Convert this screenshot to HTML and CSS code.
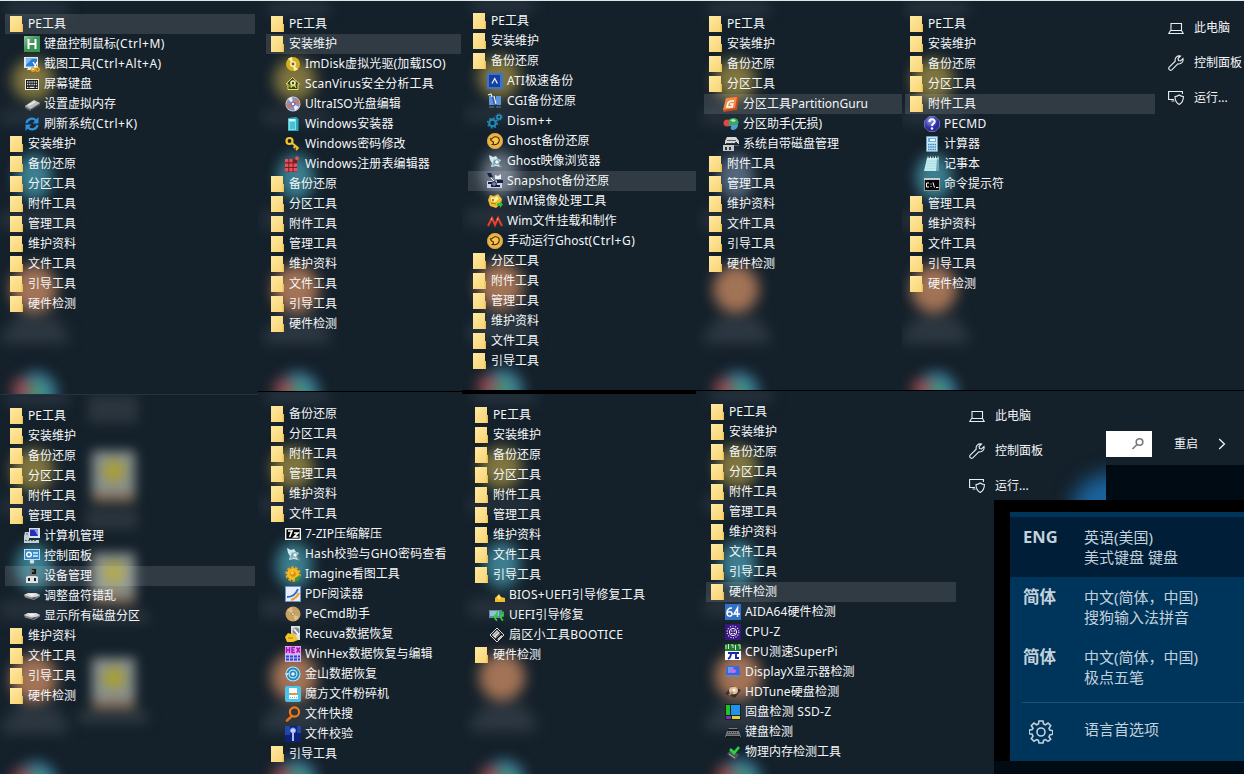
FILE: index.html
```html
<!DOCTYPE html>
<html lang="zh-CN">
<head>
<meta charset="utf-8">
<title>PE工具</title>
<link rel="stylesheet" href="styles.css">
</head>
<body>
<svg class="sprite" aria-hidden="true">
  <defs>
    <linearGradient id="gGreen" x1="0" y1="0" x2="1" y2="1"><stop offset="0" stop-color="#8fc79a"/><stop offset=".5" stop-color="#3d8f55"/><stop offset="1" stop-color="#2f9a4c"/></linearGradient>
    <radialGradient id="gPurple" cx=".4" cy=".3"><stop offset="0" stop-color="#8c93ee"/><stop offset="1" stop-color="#2c2a9c"/></radialGradient>
    <radialGradient id="gOrange"><stop offset="0" stop-color="#ffe27a"/><stop offset="1" stop-color="#eba52c"/></radialGradient>
  </defs>
  <symbol id="hkey" viewBox="0 0 16 16"><rect width="16" height="16" fill="url(#gGreen)"/><path d="M4.500 3v10M11.500 3v10M4.500 8h7" stroke="#fff" stroke-width="2" fill="none"/></symbol>
  <symbol id="shot" viewBox="0 0 16 16"><path fill="#dfe9f5" d="M0 1h14v11H0z"/><path fill="#2b7fd3" d="M2 2.500h11v8H2z"/><path fill="#7cc2f5" d="M2 3h6l-6 6z"/><path fill="#e8eef5" d="M4 12h6v2H3z"/><path d="M9 6l4 6M13 6l-3 6" stroke="#fff" stroke-width="1.300"/><circle cx="9" cy="13.500" r="1.700" fill="none" stroke="#f3a81c" stroke-width="1.500"/><circle cx="13.500" cy="13.500" r="1.700" fill="none" stroke="#f3a81c" stroke-width="1.500"/></symbol>
  <symbol id="osk" viewBox="0 0 16 16"><rect x="1.500" y="3.500" width="13" height="10" fill="#15191c" stroke="#e8e8de"/><path d="M3 6h10.500M3 8.500h10.500" stroke="#e8e8de" stroke-width="1.300" stroke-dasharray="1.300 .9"/><path d="M3 11.300h1.500M5.500 11.300h5M11.800 11.300h1.500" stroke="#e8e8de" stroke-width="1.300"/></symbol>
  <symbol id="ram" viewBox="0 0 16 16"><path fill="#66696b" d="M1 10l9-6 6 3v2L6 15 1 12z"/><path fill="#bfc2c3" d="M1 10l9-6 6 3-9.500 6z"/><path fill="#e7e7e4" d="M4 8.500l6-3.500 2 1-7 4z"/><path d="M7 14l9-5.500" stroke="#2b2d2e" stroke-dasharray="1 1"/></symbol>
  <symbol id="refresh" viewBox="0 0 16 16"><path d="M2.500 7A5.500 5.500 0 0 1 12 4.500M13.500 9A5.500 5.500 0 0 1 4 11.500" fill="none" stroke="#2b93de" stroke-width="2.400"/><path fill="#2b93de" d="M14.500 1v6.500H8.500zM1.500 15V8.500h6z"/></symbol>
  <symbol id="disc" viewBox="0 0 16 16"><circle cx="8" cy="8" r="7" fill="#d9b11c"/><path fill="#fff2a0" d="M8 8L3 2.500 7 1zM8 8l5 5.500-4 1.500z"/><circle cx="8" cy="8" r="3" fill="#f4f0d0"/><circle cx="8" cy="8" r="1.400" fill="#7a6412"/></symbol>
  <symbol id="house" viewBox="0 0 16 16"><path fill="#3b4415" stroke="#e3e36a" d="M1 8l6.500-6.500L14.500 8H13v5.500H3V8z"/><circle cx="8" cy="7" r="2.800" fill="#f5f2c8"/><path d="M6 12l2-5 3 5M4 10h7" stroke="#e8df62" fill="none"/><circle cx="8" cy="7" r="1.200" fill="#39400f"/></symbol>
  <symbol id="iso" viewBox="0 0 16 16"><circle cx="8" cy="8" r="7.500" fill="#d9d9e6"/><circle cx="8" cy="8" r="6.800" fill="#8f8fc0"/><path fill="#efeef9" d="M8 8L3 3l4-2zM8 8l6 3-4 4z"/><path fill="#c87d62" d="M8 8l5-5 2 5zM8 8l-5 5-2-5z"/><circle cx="8" cy="8" r="2" fill="#fff" stroke="#5d4c95"/></symbol>
  <symbol id="box" viewBox="0 0 16 16"><path fill="#27a7c2" d="M3 2l8-1 2.500 2v12H3z"/><path fill="#7fdce9" d="M3.500 3h7.500v11H3.500z"/><path fill="#49bfd1" d="M5 6h5v7H5z"/><path fill="#d7fafa" d="M4 3h6v2H4z"/></symbol>
  <symbol id="key" viewBox="0 0 16 16"><path d="M6.500 6.500l7 6M10.500 10l-1.800 2M12.800 12l-1.800 2" fill="none" stroke="#efc32a" stroke-width="2"/><circle cx="4.500" cy="5" r="3" fill="none" stroke="#f0c62e" stroke-width="2.200"/></symbol>
  <symbol id="reg" viewBox="0 0 16 16"><path fill="#7c1a22" d="M0 3h12v13H0z"/><path fill="#e4545c" d="M0 3h3.300v3.300H0zM4.300 3h3.300v3.300H4.300zM0 7.500h3.300v3.500H0zM4.300 7.500h3.300v3.500H4.300zM8.600 7.500H12v3.500H8.600zM0 12h3.300v3.500H0zM4.300 12h3.300v3.500H4.300zM8.600 12H12v3.500H8.600zM11 0l3 1.500-1 3-3-1z"/></symbol>
  <symbol id="ati" viewBox="0 0 16 16"><rect width="16" height="16" fill="#3a73d0"/><rect x="2" y="2" width="11" height="12" fill="#153f9f"/><path d="M5 10.500L7.700 5.500l2.700 5" fill="none" stroke="#e9f0fc" stroke-width="1.300"/></symbol>
  <symbol id="cgi" viewBox="0 0 16 16"><path fill="#5d94dd" d="M2 3h5v9H2zM9 3h5v9H9z"/><path fill="#2f62ad" d="M6 2l4 10H7L4 2z"/><path d="M1 2l3-1 1 3M7 3l2 8" fill="none" stroke="#eef4fb" stroke-width="1.200"/><path fill="#41556b" d="M2 13h5v2H2zM9 13h5v2H9z"/></symbol>
  <symbol id="gears" viewBox="0 0 16 16"><circle cx="5.500" cy="10" r="3.300" fill="none" stroke="#1f8bb9" stroke-width="2.200"/><circle cx="5.500" cy="10" r="4.900" fill="none" stroke="#1f8bb9" stroke-width="1.500" stroke-dasharray="1.800 2"/><circle cx="12" cy="4" r="2" fill="none" stroke="#2193bd" stroke-width="1.700"/><circle cx="12" cy="4" r="3.200" fill="none" stroke="#2193bd" stroke-dasharray="1.200 1.300"/></symbol>
  <symbol id="ghost" viewBox="0 0 16 16"><circle cx="8" cy="8" r="7.700" fill="url(#gOrange)" stroke="#f0c470" stroke-width=".6"/><path d="M3.500 6c2 .5 2-2 4.500-2.200C11.500 3.500 13 6 12 8.700c-1 3-4 3.300-6.500 2.800 1.500-.8 1-2 .5-3C5 8.500 3.800 7.500 3.500 6z" fill="#fbc64b" stroke="#352709" stroke-width="1.100"/></symbol>
  <symbol id="spirit" viewBox="0 0 16 16"><path fill="#cfe9ee" d="M2 2l4 2 3-1 2 3 3 1-2 3 1 4-4-1-5 1 1-4-2-3z"/><path fill="#85b3c1" d="M7 6l3 3-3 4-2-1z"/><circle cx="10" cy="9" r="2.300" fill="#eff9fa" stroke="#577c8a" stroke-width=".8"/><path d="M12 11l2.500 3.500" stroke="#819099" stroke-width="1.500"/></symbol>
  <symbol id="snap" viewBox="0 0 16 16"><path fill="#cbd3dd" d="M0 8h15v7H0z"/><path fill="#161d4d" d="M0 0h4l2 4H2zM10 7h6v3h-6zM1 9h4v2H1zM4 12h9v2H4z"/><path fill="#eef2f6" d="M8 2l3 1 3-2v5H8z"/><circle cx="7" cy="11" r="2.400" fill="#7884ba" stroke="#101637"/><path d="M4 5l3 3" stroke="#fff"/></symbol>
  <symbol id="wimp" viewBox="0 0 16 16"><path fill="#edbe35" d="M3 2l4 1 4-2 4 5-1 5-5 4-6-2-2-6z"/><path fill="#fff19c" d="M4 4l3 1 3-2 2 3-4 3-4-1z"/><circle cx="6" cy="7" r="1" fill="#9b521b"/><path d="M4 10l5 1" stroke="#bc6b18"/><path fill="#34bb35" d="M10 10h3V8l3 3.500-3 3.500v-2h-3z"/></symbol>
  <symbol id="wimm" viewBox="0 0 16 16"><path d="M1 13l4-8 3 7 3-7 4 8" fill="none" stroke="#e4402b" stroke-width="2"/><path d="M4 7l1-2M10 7l1-2" stroke="#ffab8e"/></symbol>
  <symbol id="guru" viewBox="0 0 16 16"><path fill="#c24d1d" d="M3 2l13-2-2 14-14 2z"/><path fill="#f28a49" d="M3 2l11-1-2 11-12 2z"/><path d="M11 5H7.500L5 7l-1 4h5l.7-3H7" fill="none" stroke="#fff" stroke-width="1.600"/></symbol>
  <symbol id="parta" viewBox="0 0 16 16"><ellipse cx="4.500" cy="7" rx="4" ry="3.500" fill="#dc4a42"/><ellipse cx="10.500" cy="6.500" rx="5" ry="4.500" fill="#36a768"/><path fill="#4d9bda" d="M9 9h6c0 3-3 5-5 5-2 0-3-2-2-3z"/><path fill="#b7edb0" d="M7 4l4-1 2 2-3 1z"/></symbol>
  <symbol id="dmgmt" viewBox="0 0 16 16"><path fill="#d4d8da" d="M4 1h9l3 4v3H2V5z"/><path fill="#5a6266" d="M4 4h9v1H4zM8 9h8v1h-5v5H8z"/><path fill="#c6cacb" d="M0 9h11v6H0z"/><path fill="#2f3538" d="M2 11h2v3H2zM6 11h2v3H6zM12 6h2v1h-2zM3 7h12v1H3z"/></symbol>
  <symbol id="help" viewBox="0 0 16 16"><path fill="url(#gPurple)" stroke="#8389ce" stroke-width=".7" d="M5 .5h6L15.500 5v6L11 15.500H5L.5 11V5z"/><path d="M5.300 6c0-3.500 5.700-3.500 5.400-.3C10.600 7.500 8 7.600 8 10" fill="none" stroke="#fff" stroke-width="2"/><circle cx="8" cy="12.500" r="1.200" fill="#fff"/></symbol>
  <symbol id="calc" viewBox="0 0 16 16"><path fill="#d0e8f6" stroke="#709fc2" stroke-width=".8" d="M2.500.500h11v15h-11z"/><path fill="#62b1de" d="M4 2h8v4H4z"/><path fill="#fff" d="M6 3h5v2H6z"/><path d="M4 8.500h8M4 11h8M4 13.500h8" stroke="#3585c2" stroke-width="1.500" stroke-dasharray="1.500 .7"/></symbol>
  <symbol id="note" viewBox="0 0 16 16"><path fill="#6aa7b0" d="M3 2h12v13H1z"/><path fill="#bfebee" d="M3 2h10l-1 13H0z"/><path d="M3 5h9M2.500 7.500H12M2 10h9M2 12.500h9" stroke="#9fd2d9" stroke-width=".5"/><path d="M4 .5v3M6.500.5v3M9 .5v3M11.500.5v3M14 .5v3" stroke="#e9f6f6"/></symbol>
  <symbol id="cmd" viewBox="0 0 16 16"><rect x=".5" y="2.500" width="15" height="12" fill="#050505" stroke="#8f9496"/><path fill="#c7ccce" d="M0 2h16v2H0z"/><path d="M5 7H2.500v4H5M7 7.500v1M7 10v1M9 6.500l1.500 5M12 11.500h2.500" fill="none" stroke="#fff"/></symbol>
  <symbol id="cman" viewBox="0 0 16 16"><path fill="#c3cdd5" d="M1 4h4v8h10v3H0V8z"/><path fill="#dce1e8" d="M5 0h11v10H5z"/><path fill="#2230bb" d="M6 1.500h8v6.500H6z"/><path fill="#849be9" d="M10 1.500h4V8z"/><path d="M1 12.500h12M2 6h2" stroke="#52626d" stroke-dasharray="2 1"/></symbol>
  <symbol id="cpl" viewBox="0 0 16 16"><rect x=".5" y="1.500" width="15" height="10" fill="#3589c7" stroke="#b7def4"/><circle cx="5" cy="6.500" r="2.300" fill="none" stroke="#fff" stroke-width="1.400"/><path d="M9 5h5M9 8h5" stroke="#dff3ff" stroke-width="1.300"/><circle cx="8" cy="13.500" r="2.300" fill="#d0dce2"/></symbol>
  <symbol id="dev" viewBox="0 0 16 16"><path fill="#6c7576" d="M6 0h7v8H6z"/><path fill="#141a1c" d="M8 1h4v5H8z"/><path fill="#dfe2e3" d="M2 9l2-1h8l2 1v6H2z"/><path fill="#222" d="M4 10h2v3H4zM10 10h2v3h-2z"/><path stroke="#a2c979" d="M8 3h2"/></symbol>
  <symbol id="drive" viewBox="0 0 16 16"><path fill="#85888a" d="M0 7l4-2h8l4 2v1.500l-6 3.500-9-2.500z"/><path fill="#d7d8d8" d="M0 7l4-2h8l4 2-7 3z"/><path fill="#f7f7f6" d="M4 6h7l-3 2z"/><path fill="#393d3f" d="M7 10l5-1-2 2z"/></symbol>
  <symbol id="zip" viewBox="0 0 16 16"><rect x=".7" y="2.700" width="14.600" height="10.600" fill="#080808" stroke="#fff" stroke-width="1.300"/><path d="M3 5h4L4.500 11M9 7h4l-4 4h4.500" fill="none" stroke="#fff" stroke-width="1.600"/></symbol>
  <symbol id="sunny" viewBox="0 0 16 16"><circle cx="8" cy="8" r="6.500" fill="none" stroke="#e9a51a" stroke-width="2.500" stroke-dasharray="2.500 1.500"/><circle cx="8" cy="8" r="6" fill="#f4bb20"/><path fill="#379a35" d="M10 12l5-3-1 5-4 1z"/><circle cx="8" cy="8" r="2.800" fill="#dc891a"/><circle cx="7.300" cy="7" r="1.400" fill="#ffda4b"/></symbol>
  <symbol id="pdf" viewBox="0 0 16 16"><rect x=".5" y=".5" width="15" height="15" fill="#e7eef7" stroke="#6593cf"/><path d="M2 11c5 0 9-3 11-8" fill="none" stroke="#326cc3" stroke-width="2"/><path d="M6 14c4-1 6-3 8-7" fill="none" stroke="#f19d31" stroke-width="2.300"/></symbol>
  <symbol id="pecmd" viewBox="0 0 16 16"><circle cx="8" cy="8" r="7.500" fill="#c8a163"/><path fill="#e0c18c" d="M8 8L2 4l5-3zM8 8l6 3-4 4z"/><circle cx="8" cy="8" r="1.500" fill="#f3e5c7" stroke="#b08c55"/></symbol>
  <symbol id="recuva" viewBox="0 0 16 16"><path fill="#dce0e4" d="M6 0h9v14H6z"/><circle cx="11" cy="5" r="3.500" fill="#818fa0"/><path d="M9 3l5 6" stroke="#fff" stroke-width="1.500"/><path fill="#f2c72b" d="M0 11l3-4 3 1 1-2 4 4 2 4-5 2H2z"/><path d="M3 12h5" stroke="#af8011"/></symbol>
  <symbol id="hex" viewBox="0 0 16 16"><rect width="16" height="16" fill="#efa2f3"/><path d="M1.500 1v6M4.500 1v6M1.500 4h3M10 1.500H7v5h3M7 4h2.500M11.500 1.500l3.500 5M15 1.500l-3.500 5" fill="none" stroke="#a018b8" stroke-width="1.500"/><path fill="#c4bdf6" d="M0 8h16v8H0z"/><path d="M1 10.500h14M1 13.500h14" stroke="#3440c6" stroke-width="2" stroke-dasharray="3 1"/></symbol>
  <symbol id="kspin" viewBox="0 0 16 16"><circle cx="8" cy="8" r="7.500" fill="#b9e5f5"/><circle cx="8" cy="8" r="5.500" fill="none" stroke="#2587bf" stroke-width="2"/><circle cx="8" cy="8" r="2.500" fill="#e9f9ff" stroke="#2587bf" stroke-width="1.500"/><path fill="#b9e5f5" d="M0 7h4l-2 3z"/></symbol>
  <symbol id="shred" viewBox="0 0 16 16"><rect width="16" height="16" rx="2" fill="#4cc3ea"/><path fill="#f5fbff" d="M4 2h8v5H4zM4 9h9v4H4z"/><path fill="#ed9139" d="M5 7h7v2H5z"/><path d="M5 11.500h7" stroke="#5bb8dd" stroke-dasharray="1 1"/></symbol>
  <symbol id="find" viewBox="0 0 16 16"><path d="M7 10l-5 4.500" stroke="#ee6b13" stroke-width="2.600" stroke-linecap="round"/><circle cx="9.500" cy="6" r="4.600" fill="none" stroke="#f27716" stroke-width="2.200"/></symbol>
  <symbol id="verify" viewBox="0 0 16 16"><rect width="16" height="16" fill="#0c237c"/><path fill="#2347a8" d="M0 0h5v9H0zM12 0h4v7h-4z"/><circle cx="8" cy="4.500" r="2.600" fill="#c6d4fc" stroke="#8194eb"/><path d="M8 7v8" stroke="#c2ccfa" stroke-width="1.800"/></symbol>
  <symbol id="bios" viewBox="0 0 16 16"><path fill="#f2bd27" d="M6 11l4-4 2 3 4 1v4H6z"/><path fill="#ffe57d" d="M8 10l2-2 2 3-2 2z"/><path stroke="#2b3843" d="M4 1v6"/></symbol>
  <symbol id="uefi" viewBox="0 0 16 16"><path fill="#65889a" d="M0 3h13v8H0z"/><path fill="#8cc3d5" d="M1 4h9v5H1z"/><path d="M8 13.500c-3.500-3-2.500-6 0-6.500M8 4.500V9H5M14 13.500c-3.500-3-2.500-6 0-6.500M14 4.500V9h-3" fill="none" stroke="#2fd043" stroke-width="1.700"/></symbol>
  <symbol id="boot" viewBox="0 0 16 16"><path fill="#15181a" stroke="#dedede" d="M1 8l7-7 7 7-7 7z"/><path fill="#d9d9d9" d="M3 8l5-5 3.500 3.500-5 5zM8 12.500l4.500-4.500 1 1-4 4z"/><path d="M5 8.500l4-4M7 10l4-4" stroke="#555" stroke-width=".8"/></symbol>
  <symbol id="aida" viewBox="0 0 16 16"><rect width="16" height="16" fill="#3172c6"/><path d="M7 4C4 4 2 6 2 9c0 4 5 4 5 1 0-3-4-3-5-.5M12.500 13V4L9 10h6" fill="none" stroke="#fff" stroke-width="1.500"/></symbol>
  <symbol id="cpuz" viewBox="0 0 16 16"><rect width="16" height="16" fill="#38157f"/><circle cx="8" cy="8" r="3.600" fill="none" stroke="#fff"/><circle cx="8" cy="8" r="5.800" fill="none" stroke="#ded2fc" stroke-width="1.200" stroke-dasharray="1.200 1.400"/><path d="M6 7h4M6 9.500h4" stroke="#fff" stroke-dasharray="1.500 1"/></symbol>
  <symbol id="pi" viewBox="0 0 16 16"><rect width="16" height="16" fill="#fff"/><path fill="#207a32" d="M0 0h16v7H0z"/><path d="M1 1v4M3.500 0v5M6 1h2v3M10.500 1v5M13 1h2v4" fill="none" stroke="#cdf5bd"/><path d="M3 9h11M6 9c0 3-1 5-3 6M11 9v5h3" fill="none" stroke="#1b28aa" stroke-width="1.900"/></symbol>
  <symbol id="dispx" viewBox="0 0 16 16"><path fill="#3965e2" d="M2 2h12l1 9H1z"/><path fill="#6a9cf0" d="M3 3h6l-4 6H3z"/><ellipse cx="8" cy="7" rx="3" ry="2" fill="#c66ed9"/><path fill="#6b85bd" d="M2 11h12l1 1.500H1z"/></symbol>
  <symbol id="hdt" viewBox="0 0 16 16"><path fill="#3e3129" d="M0 10l7-8 9 4-6 8z"/><ellipse cx="8.500" cy="6.500" rx="4.500" ry="3.700" fill="#dfc09b"/><circle cx="9" cy="6" r="1.500" fill="#fff7e8"/><path stroke="#a38a72" stroke-width="2" d="M4 11l4-3"/></symbol>
  <symbol id="ssdz" viewBox="0 0 16 16"><rect width="16" height="16" fill="#18231b"/><path fill="#1dc427" d="M1 1h4v10H1z"/><path fill="#1f93ec" d="M6 1h9v10H6z"/><path fill="#7f2cc0" d="M1 12h5v3H1z"/><path fill="#e4cf36" d="M7 12h8v3H7z"/></symbol>
  <symbol id="kbd" viewBox="0 0 16 16"><path fill="#777b7d" d="M2 7l2-3h8l2 3 2 6H0z"/><path fill="#15191c" d="M3 5h10l1 2H2zM1 12h14v2H1z"/><path d="M3 8.500h10M2.500 10.500h11" stroke="#24292b" stroke-dasharray="1 1"/></symbol>
  <symbol id="mem" viewBox="0 0 16 16"><path fill="#4e5459" d="M2 10l5-5 7 6-4 5z"/><path stroke="#a6b0b3" d="M4 10l6 4"/><path d="M5 5l4 4 5-6" fill="none" stroke="#26d63b" stroke-width="2.600"/></symbol>
  <symbol id="pc" viewBox="0 0 16 16"><path d="M3 3.500h10.500v7H3zM2.500 10.500L.8 13.500h14.400l-1.700-3" fill="none" stroke="#e8eef2" stroke-width="1.100"/></symbol>
  <symbol id="wrench" viewBox="0 0 16 16"><path d="M1.200 12.200l6-6C6.500 3 9 .3 12.500 1L10 3.500l.5 2 2 .5L15 3.500c.7 3.500-2 6-5.200 5.300l-6 6c-1.800 1.500-4-.8-2.600-2.600z" fill="none" stroke="#e8eef2" stroke-width="1.100"/></symbol>
  <symbol id="run" viewBox="0 0 16 16"><path d="M6 9.500H.6v-8h13.800V4M3.500 11h3" fill="none" stroke="#e8eef2" stroke-width="1.100"/><path d="M7 6.500c2 0 3-.6 4.200-1.500 1.200.9 2.300 1.500 4.200 1.500 0 4-1 6.300-4.200 8C8 12.800 7 10.500 7 6.500z" fill="none" stroke="#e8eef2" stroke-width="1.100"/></symbol>
</svg>

<main class="collage">
  <div class="column column-a">
    <section class="panel glow pe">
      <ul class="menu">
        <li class="on">PE工具</li>
        <li class="sub"><svg><use href="#hkey"/></svg>键盘控制鼠标<b class="w">(Ctrl+M)</b></li>
        <li class="sub"><svg><use href="#shot"/></svg>截图工具<b class="w">(Ctrl+Alt+A)</b></li>
        <li class="sub"><svg><use href="#osk"/></svg>屏幕键盘</li>
        <li class="sub"><svg><use href="#ram"/></svg>设置虚拟内存</li>
        <li class="sub"><svg><use href="#refresh"/></svg>刷新系统<b class="w">(Ctrl+K)</b></li>
        <li>安装维护</li><li>备份还原</li><li>分区工具</li><li>附件工具</li><li>管理工具</li><li>维护资料</li><li>文件工具</li><li>引导工具</li><li>硬件检测</li>
      </ul>
    </section>
    <section class="panel glow manage">
      <ul class="menu">
        <li>PE工具</li><li>安装维护</li><li>备份还原</li><li>分区工具</li><li>附件工具</li><li>管理工具</li>
        <li class="sub"><svg><use href="#cman"/></svg>计算机管理</li>
        <li class="sub"><svg><use href="#cpl"/></svg>控制面板</li>
        <li class="sub on"><svg><use href="#dev"/></svg>设备管理</li>
        <li class="sub"><svg><use href="#drive"/></svg>调整盘符错乱</li>
        <li class="sub"><svg><use href="#drive"/></svg>显示所有磁盘分区</li>
        <li>维护资料</li><li>文件工具</li><li>引导工具</li><li>硬件检测</li>
      </ul>
    </section>
  </div>

  <div class="column column-b">
    <section class="panel glow install">
      <ul class="menu">
        <li>PE工具</li>
        <li class="on">安装维护</li>
        <li class="sub mix"><svg><use href="#disc"/></svg>ImDisk虚拟光驱(加载ISO)</li>
        <li class="sub mix"><svg><use href="#house"/></svg>ScanVirus安全分析工具</li>
        <li class="sub"><svg><use href="#iso"/></svg>UltraISO光盘编辑</li>
        <li class="sub mix"><svg><use href="#box"/></svg>Windows安装器</li>
        <li class="sub mix"><svg><use href="#key"/></svg>Windows密码修改</li>
        <li class="sub mix"><svg><use href="#reg"/></svg>Windows注册表编辑器</li>
        <li>备份还原</li><li>分区工具</li><li>附件工具</li><li>管理工具</li><li>维护资料</li><li>文件工具</li><li>引导工具</li><li>硬件检测</li>
      </ul>
    </section>
    <section class="panel glow files">
      <ul class="menu">
        <li>备份还原</li><li>分区工具</li><li>附件工具</li><li>管理工具</li><li>维护资料</li><li>文件工具</li>
        <li class="sub"><svg><use href="#zip"/></svg>7-ZIP压缩解压</li>
        <li class="sub mix"><svg><use href="#spirit"/></svg>Hash校验与GHO密码查看</li>
        <li class="sub"><svg><use href="#sunny"/></svg>Imagine看图工具</li>
        <li class="sub"><svg><use href="#pdf"/></svg>PDF阅读器</li>
        <li class="sub mix"><svg><use href="#pecmd"/></svg>PeCmd助手</li>
        <li class="sub"><svg><use href="#recuva"/></svg>Recuva数据恢复</li>
        <li class="sub"><svg><use href="#hex"/></svg>WinHex数据恢复与编辑</li>
        <li class="sub"><svg><use href="#kspin"/></svg>金山数据恢复</li>
        <li class="sub"><svg><use href="#shred"/></svg>魔方文件粉碎机</li>
        <li class="sub"><svg><use href="#find"/></svg>文件快搜</li>
        <li class="sub"><svg><use href="#verify"/></svg>文件校验</li>
        <li>引导工具</li>
      </ul>
    </section>
  </div>

  <div class="column column-c">
    <section class="panel glow backup">
      <ul class="menu">
        <li>PE工具</li><li>安装维护</li><li>备份还原</li>
        <li class="sub mix"><svg><use href="#ati"/></svg>ATI极速备份</li>
        <li class="sub mix"><svg><use href="#cgi"/></svg>CGI备份还原</li>
        <li class="sub"><svg><use href="#gears"/></svg><b class="w">Dism++</b></li>
        <li class="sub mix"><svg><use href="#ghost"/></svg>Ghost备份还原</li>
        <li class="sub"><svg><use href="#spirit"/></svg>Ghost映像浏览器</li>
        <li class="sub on mix"><svg><use href="#snap"/></svg>Snapshot备份还原</li>
        <li class="sub mix"><svg><use href="#wimp"/></svg>WIM镜像处理工具</li>
        <li class="sub"><svg><use href="#wimm"/></svg>Wim文件挂载和制作</li>
        <li class="sub"><svg><use href="#ghost"/></svg>手动运行Ghost<b class="w">(Ctrl+G)</b></li>
        <li>分区工具</li><li>附件工具</li><li>管理工具</li><li>维护资料</li><li>文件工具</li><li>引导工具</li>
      </ul>
    </section>
    <section class="panel glow bootfix">
      <ul class="menu">
        <li>PE工具</li><li>安装维护</li><li>备份还原</li><li>分区工具</li><li>附件工具</li><li>管理工具</li><li>维护资料</li><li>文件工具</li><li>引导工具</li>
        <li class="sub wide-text"><svg><use href="#bios"/></svg>BIOS+UEFI引导修复工具</li>
        <li class="sub mix"><svg><use href="#uefi"/></svg>UEFI引导修复</li>
        <li class="sub wide-text"><svg><use href="#boot"/></svg>扇区小工具BOOTICE</li>
        <li>硬件检测</li>
      </ul>
    </section>
  </div>

  <div class="wide">
    <div class="row-top">
      <section class="panel glow partition">
        <ul class="menu">
          <li>PE工具</li><li>安装维护</li><li>备份还原</li><li>分区工具</li>
          <li class="sub on"><svg><use href="#guru"/></svg>分区工具PartitionGuru</li>
          <li class="sub"><svg><use href="#parta"/></svg>分区助手(无损)</li>
          <li class="sub"><svg><use href="#dmgmt"/></svg>系统自带磁盘管理</li>
          <li>附件工具</li><li>管理工具</li><li>维护资料</li><li>文件工具</li><li>引导工具</li><li>硬件检测</li>
        </ul>
      </section>
      <section class="panel glow accessory">
        <ul class="menu">
          <li>PE工具</li><li>安装维护</li><li>备份还原</li><li>分区工具</li>
          <li class="on">附件工具</li>
          <li class="sub wide-text"><svg><use href="#help"/></svg>PECMD</li>
          <li class="sub"><svg><use href="#calc"/></svg>计算器</li>
          <li class="sub"><svg><use href="#note"/></svg>记事本</li>
          <li class="sub"><svg><use href="#cmd"/></svg>命令提示符</li>
          <li>管理工具</li><li>维护资料</li><li>文件工具</li><li>引导工具</li><li>硬件检测</li>
        </ul>
        <ul class="places">
          <li><svg><use href="#pc"/></svg>此电脑</li>
          <li><svg><use href="#wrench"/></svg>控制面板</li>
          <li><svg><use href="#run"/></svg>运行...</li>
        </ul>
      </section>
    </div>
    <div class="row-bottom">
      <section class="panel glow hardware">
        <ul class="menu">
          <li>PE工具</li><li>安装维护</li><li>备份还原</li><li>分区工具</li><li>附件工具</li><li>管理工具</li><li>维护资料</li><li>文件工具</li><li>引导工具</li>
          <li class="on">硬件检测</li>
          <li class="sub mix"><svg><use href="#aida"/></svg>AIDA64硬件检测</li>
          <li class="sub wide-text"><svg><use href="#cpuz"/></svg>CPU-Z</li>
          <li class="sub mix"><svg><use href="#pi"/></svg>CPU测速SuperPi</li>
          <li class="sub mix"><svg><use href="#dispx"/></svg>DisplayX显示器检测</li>
          <li class="sub mix"><svg><use href="#hdt"/></svg>HDTune硬盘检测</li>
          <li class="sub wide-text"><svg><use href="#ssdz"/></svg>固盘检测 SSD-Z</li>
          <li class="sub"><svg><use href="#kbd"/></svg>键盘检测</li>
          <li class="sub"><svg><use href="#mem"/></svg>物理内存检测工具</li>
        </ul>
        <ul class="places">
          <li><svg><use href="#pc"/></svg>此电脑</li>
          <li><svg><use href="#wrench"/></svg>控制面板</li>
          <li><svg><use href="#run"/></svg>运行...</li>
        </ul>
      </section>
      <aside class="power">
        <div class="power-bar">
          <div class="search"><svg viewBox="0 0 14 14"><circle cx="8.500" cy="5" r="3.300"/><path d="M6 7.500L1.500 12"/></svg></div>
          <span>重启</span>
          <svg class="chevron" viewBox="0 0 8 12"><path d="M1.200 1l5.200 5-5.200 5"/></svg>
        </div>
      </aside>
    </div>
  </div>

  <section class="flyout">
    <div class="languages">
      <div class="lang current"><strong>ENG</strong><p>英语(美国)<br>美式键盘 键盘</p></div>
      <div class="lang"><strong>简体</strong><p>中文(简体<i>，</i>中国)<br>搜狗输入法拼音</p></div>
      <div class="lang"><strong>简体</strong><p>中文(简体<i>，</i>中国)<br>极点五笔</p></div>
      <div class="prefs">
        <svg viewBox="0 0 24 24"><path d="M10 1h4l.6 3 1.900.8L19 3l2.700 2.700-1.700 2.600.8 1.800 3 .6v3.600l-3 .6-.8 1.900 1.700 2.500L19 21.300l-2.500-1.700-1.900.8-.6 2.600h-4l-.6-2.600-1.900-.8L5 21.300l-2.700-2.600L4 16.200l-.8-1.900-3-.6v-3.600l3-.6L4 8.300 2.300 5.700 5 3l2.500 1.800 1.900-.8z"/><circle cx="12" cy="12" r="4"/></svg>
        <span>语言首选项</span>
      </div>
    </div>
  </section>
</main>
</body>
</html>
```
FILE: styles.css
```css
* { box-sizing: border-box; }

body {
  margin: 0;
  width: 1244px;
  height: 774px;
  overflow: hidden;
  background: #000;
  color: #f4f7f9;
  font: 12px/20px "Noto Sans", "Noto Sans CJK SC", sans-serif;
}

ul { list-style: none; margin: 0; padding: 0; }

.sprite { position: absolute; width: 0; height: 0; }

.collage {
  position: relative;
  display: flex;
  height: 774px;
  border-top: 1px solid #dfe8e4;
}

.column { display: flex; flex-direction: column; height: 773px; }
.column-a { width: 258px; }
.column-b { width: 204px; }
.column-c { width: 234px; }
.wide { width: 548px; display: flex; flex-direction: column; }

.panel { position: relative; background-color: #14202a; overflow: hidden; }

/* Blurred desktop icons showing through the translucent menu */
.glow {
  --x: 34px;
  --y: 0px;
  --mid: #3c7f90;
}
.glow::before {
  content: "";
  position: absolute;
  left: 0;
  top: var(--y);
  width: 90px;
  height: 420px;
  filter: blur(7px);
  background:
    linear-gradient(#303c48, #303c48) calc(var(--x) - 28px) 3px / 62px 9px no-repeat,
    radial-gradient(circle 21px at calc(var(--x) - 1px) 79px, #80753f 99%, transparent),
    linear-gradient(#27323c, #27323c) calc(var(--x) - 34px) 109px / 66px 14px no-repeat,
    radial-gradient(ellipse 18px 23px at var(--x) 176px, var(--mid) 99%, transparent),
    linear-gradient(#27323c, #27323c) calc(var(--x) - 34px) 210px / 66px 18px no-repeat,
    radial-gradient(ellipse 23px 24px at var(--x) 288px, #a37356 99%, transparent),
    linear-gradient(#2c3741, #2c3741) calc(var(--x) - 22px) 316px / 48px 15px no-repeat,
    linear-gradient(#2e3943, #2e3943) calc(var(--x) - 32px) 329px / 66px 13px no-repeat,
    radial-gradient(circle 10px at calc(var(--x) - 12px) 388px, #a04a50 99%, transparent),
    radial-gradient(circle 10px at calc(var(--x) + 2px) 391px, #3d9a72 99%, transparent),
    radial-gradient(circle 21px at calc(var(--x) + 2px) 392px, #3e7d9c 99%, transparent);
}
.panel > ul { position: relative; }

.pe { height: 393px; padding: 13px 3px 0 5px; }
.manage {
  --y: -4px;
  flex: 1;
  border-top: 1px solid #26323c;
  padding: 11px 3px 0 5px;
}
.manage::after {
  content: "";
  position: absolute;
  left: 70px;
  top: 0;
  width: 100px;
  height: 379px;
  filter: blur(6px);
  background:
    linear-gradient(#2b353d, #2b353d) 18px 0 / 50px 28px no-repeat,
    radial-gradient(circle 11px at 44px 76px, #a89f35 99%, transparent),
    linear-gradient(#89918f 82%, #836c57 82%) 22px 56px / 43px 51px no-repeat,
    linear-gradient(#2b353d, #2b353d) 16px 114px / 52px 20px no-repeat,
    radial-gradient(circle 11px at 44px 178px, #a89f35 99%, transparent),
    linear-gradient(#89918f 82%, #836c57 82%) 22px 158px / 43px 51px no-repeat,
    linear-gradient(#2b353d, #2b353d) 12px 216px / 66px 12px no-repeat,
    radial-gradient(circle 11px at 44px 283px, #a89f35 99%, transparent),
    linear-gradient(#89918f 82%, #836c57 82%) 22px 263px / 43px 51px no-repeat,
    linear-gradient(#2b353d, #2b353d) 8px 315px / 70px 14px no-repeat;
}
.manage .menu { z-index: 1; }

.install { --x: 38px; height: 390px; padding: 13px 1px 0 8px; }
.files { --x: 36px; --y: -3px; flex: 1; margin-top: 1px; padding: 12px 1px 0 8px; }
.backup { --x: 38px; --y: -3px; --mid: #6c7786; height: 389px; padding: 10px 0 0 6px; }
.bootfix { --x: 40px; --y: -5px; flex: 1; margin-top: 4px; padding: 11px 0 0 8px; }

.row-top { display: flex; height: 389px; }
.partition { --x: 40px; --mid: #56677c; width: 206px; padding: 13px 0 0 8px; }
.accessory { --x: 32px; width: 342px; padding: 13px 0 0 3px; display: flex; }
.accessory .menu { width: 250px; }
.accessory .places { padding: 0 0 0 13px; }

.row-bottom { display: flex; flex: 1; margin-top: 1px; }
.hardware {
  --x: 42px;
  --y: -3px;
  width: 410px;
  padding: 11px 0 0 10px;
  display: flex;
}
.hardware::after {
  content: "";
  position: absolute;
  left: 376px;
  top: 82px;
  width: 70px;
  height: 60px;
  border-radius: 60% 0 0 0;
  background: #1a639c;
  filter: blur(10px);
}
.hardware .menu { width: 250px; }
.hardware .places { padding: 0 0 0 13px; z-index: 1; }

.menu { width: 100%; }
.menu li {
  display: flex;
  align-items: center;
  height: 20px;
  padding-left: 5px;
  white-space: pre;
}
.menu li::before {
  content: "";
  flex: none;
  width: 13px;
  height: 16px;
  margin-right: 5px;
  background:
    linear-gradient(90deg, #f8d779, #e4b949) 11px 8px / 2px 8px no-repeat,
    linear-gradient(135deg, #ffe9a0, #f8d475) 0 0 / 12px 16px no-repeat;
}
.menu .on { background: rgba(255, 255, 255, .12); }
.menu .sub { padding-left: 19px; }
.menu .sub::before { display: none; }
.menu .mix { letter-spacing: .13px; }
.menu .wide-text { letter-spacing: .25px; }
.menu svg { flex: none; width: 16px; height: 16px; margin-right: 4px; }
.w { font-weight: 400; letter-spacing: .5px; }

.places { margin-top: -4px; }
.places li { display: flex; align-items: center; height: 35px; white-space: nowrap; }
.places svg { width: 16px; height: 16px; margin-right: 10px; }

.power { flex: 1; background: #000b13; }
.power-bar {
  display: flex;
  align-items: center;
  height: 74px;
  padding-top: 32px;
  background: #14202a;
}
.search {
  display: flex;
  align-items: center;
  justify-content: flex-end;
  width: 46px;
  height: 26px;
  padding-right: 7px;
  background: #fff;
}
.search svg { width: 14px; height: 14px; fill: none; stroke: #777; stroke-width: 1.6; }
.power span { margin-left: 22px; }
.chevron { width: 8px; height: 12px; margin-left: 20px; fill: none; stroke: #e8eef2; stroke-width: 1.4; }

/* Input-language popup floats over the desktop */
.flyout {
  position: absolute;
  z-index: 2;
  left: 994px;
  top: 499px;
  width: 250px;
  height: 274px;
  padding: 12px 0 0 16px;
  background: linear-gradient(#000 261px, #000b13 261px);
}
.languages { height: 249px; padding-top: 5px; background: #00355b; color: #c3d1dc; }
.lang {
  display: flex;
  height: 60px;
  padding: 10px 0 0 13px;
  font-size: 15px;
}
.lang.current { background: #001e38; }
.lang strong { width: 61px; font-size: 16.5px; font-weight: 700; }
.lang p { margin: 0; white-space: nowrap; }
.lang i { font-style: normal; font-family: "Noto Sans CJK TC", sans-serif; }
.prefs {
  display: flex;
  align-items: center;
  height: 58px;
  margin: 5px 0 0 12px;
  padding-left: 7px;
  border-top: 1px solid #234f72;
  font-size: 15px;
}
.prefs svg { width: 24px; height: 24px; margin-right: 31px; fill: none; stroke: #c3d1dc; stroke-width: 1.6; }
.prefs span { padding-bottom: 5px; }
```
